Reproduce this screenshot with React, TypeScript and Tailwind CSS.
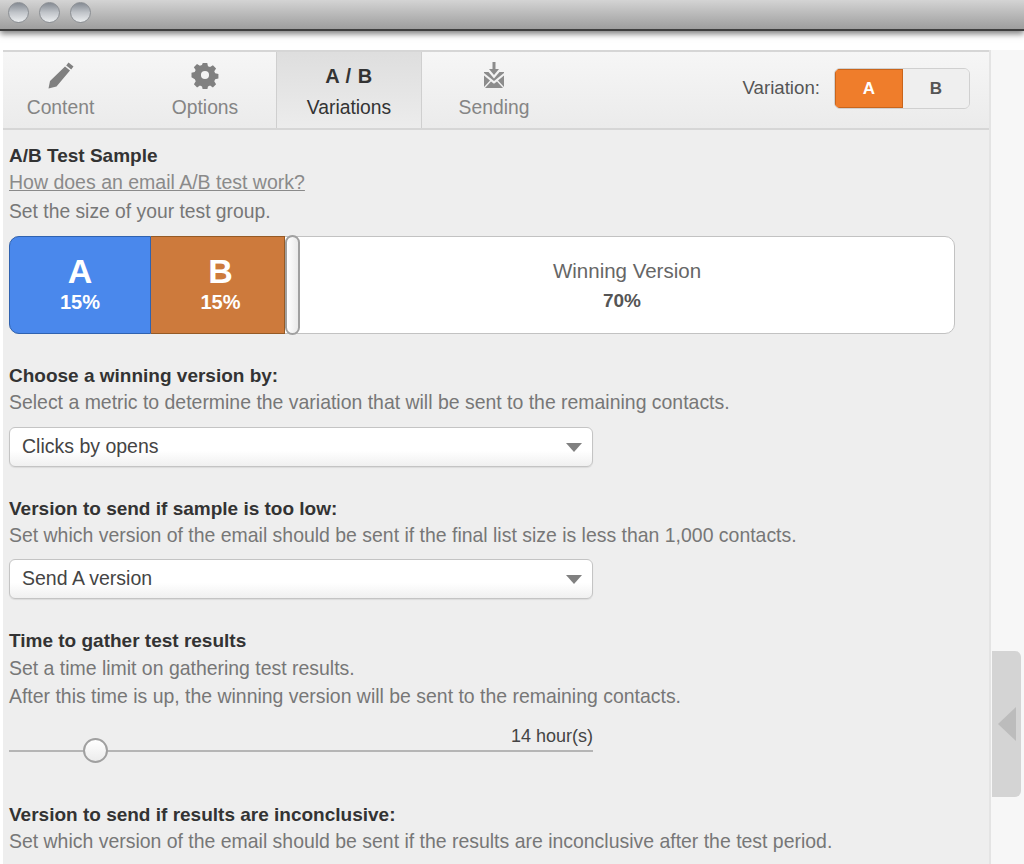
import React from "react";

const Heading = ({ children }: { children: React.ReactNode }) => (
  <div className="h-[26px] text-[19px] leading-[26px] font-bold text-[#333333]">{children}</div>
);
const Hint = ({ children }: { children: React.ReactNode }) => (
  <div className="h-[27px] text-[19.450px] leading-[27px] text-[#777777]">{children}</div>
);
const SelectBox = ({ label }: { label: string }) => (
  <div className="flex h-[40px] w-[584px] items-center justify-between rounded-[6px] border border-[#c4c4c4] bg-gradient-to-b from-white from-60% to-[#f0f0f0] pl-3 pr-[10px] shadow-[0_1px_1px_rgba(0,0,0,0.08)]">
    <span className="text-[19.500px] text-[#444444]">{label}</span>
    <svg width="16" height="10" viewBox="0 0 16 10"><path d="M0 1h16L8 10z" fill="#808080" /></svg>
  </div>
);
const Light = () => (
  <div className="h-[21px] w-[21px] rounded-full border border-[#8b8f94] bg-gradient-to-b from-[#858b93] via-[#c0c4c9] to-[#eceef0]" />
);
const TabLabel = ({ children, active }: { children: React.ReactNode; active?: boolean }) => (
  <span className={`text-[19.300px] leading-[22px] ${active ? "text-[#333333]" : "text-[#858585]"}`}>{children}</span>
);

export default function App() {
  return (
    <div className="relative flex h-[864px] w-[1024px] flex-col overflow-hidden bg-white font-['Liberation_Sans',Arial,sans-serif]">
      <div className="flex h-[31px] shrink-0 items-center gap-[10px] border-b-2 border-[#3e3e3e] bg-gradient-to-b from-[#d4d4d4] to-[#9e9e9e] pb-[5px] pl-[8px] shadow-[0_3px_6px_rgba(0,0,0,0.5)]">
        <Light />
        <Light />
        <Light />
      </div>
      <div className="h-[19px] shrink-0" />
      <div className="flex min-h-0 flex-1">
        <div className="w-[3px] shrink-0" />
        <div className="flex w-[988px] shrink-0 flex-col border-r-2 border-[#e4e4e4] bg-[#eeeeee]">
          <div className="flex h-[80px] shrink-0 items-stretch border-b-2 border-t-2 border-[#d6d6d6] bg-gradient-to-b from-[#f6f6f6] to-[#ebebeb]">
            <div className="flex w-[131px] flex-col items-center pt-[9px] pr-[16px]">
              <svg width="28" height="28" viewBox="0 0 28 28" fill="#808080">
                <path d="M21.500 1.500l5 4-2.300 3-5-4zM18 5.500l5 4L9.500 25.500 1.500 27.500l1.500-7.500z" />
              </svg>
              <div className="mt-[8px]"><TabLabel>Content</TabLabel></div>
            </div>
            <div className="flex w-[142px] flex-col items-center pt-[9px]">
              <svg width="28" height="28" viewBox="0 0 28 28" fill="#808080">
                <path fillRule="evenodd" d="M11.500 1h5l.8 3.600 2.300 1 3.200-2 3.500 3.500-2 3.200 1 2.300 3.600.8v5l-3.600.8-1 2.300 2 3.200-3.500 3.500-3.200-2-2.300 1-.8 3.600h-5l-.8-3.600-2.300-1-3.200 2-3.500-3.500 2-3.200-1-2.300L-1 17v-5l3.600-.8 1-2.300-2-3.200 3.500-3.500 3.200 2 2.300-1zM14 10a4.500 4.500 0 100 9 4.500 4.500 0 000-9z" transform="translate(1.400 1) scale(.9)" />
              </svg>
              <div className="mt-[8px]"><TabLabel>Options</TabLabel></div>
            </div>
            <div className="flex w-[146px] flex-col items-center border-x-[1.5px] border-[#cfcfcf] bg-gradient-to-b from-[#dedede] to-[#ececec] pt-[12px]">
              <span className="h-[25px] text-[20px] font-bold leading-[25px] tracking-[0.5px] text-[#333333]">A / B</span>
              <div className="mt-[8px]"><TabLabel active>Variations</TabLabel></div>
            </div>
            <div className="flex w-[144px] flex-col items-center pt-[9px]">
              <svg width="24" height="28" viewBox="0 0 24 28" fill="#8c8c8c">
                <path d="M10.500 1h3v7h3.500L12 14 7 8h3.500z" />
                <path d="M2 11h4.500l5.500 6.500 5.500-6.500H22v1L12 20 2 12zM2 14.500l6 5-6 6.500zM22 14.500l-6 5 6 6.500zM3 27l6-6.500 3 2.200 3-2.200 6 6.500z" />
              </svg>
              <div className="mt-[8px]"><TabLabel>Sending</TabLabel></div>
            </div>
            <div className="flex flex-1 items-start justify-end pt-[16px] pr-[19px]">
              <span className="mr-[14px] mt-[10px] text-[18.700px] leading-[20px] text-[#555555]">Variation:</span>
              <div className="flex h-[41px] w-[136px] overflow-hidden rounded-[6px] border border-[#d0d0d0] text-[17px] font-bold">
                <div className="flex w-[68px] items-center justify-center border border-[#c9651c] bg-[#ef7d2b] text-white">A</div>
                <div className="flex flex-1 items-center justify-center bg-[#efefef] text-[#555555]">B</div>
              </div>
            </div>
          </div>

          <div className="flex-1 overflow-hidden pl-[6px] pt-[13px]">
            <Heading>A/B Test Sample</Heading>
            <div className="h-[27px] text-[19.500px] leading-[27px] text-[#8a8a8a] underline">How does an email A/B test work?</div>
            <div className="h-[29px] text-[19.300px] leading-[31px] text-[#777777]">Set the size of your test group.</div>

            <div className="relative mt-[11px] flex h-[98px] w-[946px] rounded-[10px] border border-[#c2c2c2] bg-white">
              <div className="-my-px -ml-px flex w-[142px] flex-col items-center rounded-l-[10px] border border-[#2f62b0] bg-[#4a88ec] pt-[14px] text-white">
                <span className="text-[34px] font-bold leading-[40px]">A</span>
                <span className="text-[20px] font-bold leading-[22px]">15%</span>
              </div>
              <div className="-my-px flex w-[134px] flex-col items-center border-y border-r border-[#955a25] bg-[#cd7a3c] pl-[6px] pt-[14px] text-white">
                <span className="text-[34px] font-bold leading-[40px]">B</span>
                <span className="text-[20px] font-bold leading-[22px]">15%</span>
              </div>
              <div className="-my-[2px] h-[100px] w-[15px] shrink-0 rounded-[8px] border-2 border-[#a0a0a0] bg-gradient-to-r from-white to-[#eaeaea]" />
              <div className="flex flex-1 flex-col items-center pt-[19px] text-[20.500px] leading-[30px] text-[#666666]">
                <span>Winning Version</span>
                <span className="mr-[10px] text-[19px] font-bold text-[#555555]">70%</span>
              </div>
            </div>

            <div className="mt-[29px]"><Heading>Choose a winning version by:</Heading></div>
            <Hint>Select a metric to determine the variation that will be sent to the remaining contacts.</Hint>
            <div className="mt-[11px]"><SelectBox label="Clicks by opens" /></div>

            <div className="mt-[29px]"><Heading>Version to send if sample is too low:</Heading></div>
            <Hint>Set which version of the email should be sent if the final list size is less than 1,000 contacts.</Hint>
            <div className="mt-[10px]"><SelectBox label="Send A version" /></div>

            <div className="mt-[29px]"><Heading>Time to gather test results</Heading></div>
            <div className="h-[29px] text-[19.450px] leading-[29px] text-[#777777]">Set a time limit on gathering test results.</div>
            <div className="h-[27px] text-[19.450px] leading-[27px] text-[#777777]">After this time is up, the winning version will be sent to the remaining contacts.</div>

            <div className="relative mt-[14px] h-[28px] w-[584px] border-b-2 border-[#b5b5b5]">
              <div className="text-right text-[18px] leading-[24px] text-[#444444]">14 hour(s)</div>
              <div className="absolute left-[74px] top-[14px] h-[25px] w-[25px] rounded-full border-2 border-[#a0a0a0] bg-gradient-to-b from-white to-[#ececec]" />
            </div>

            <div className="mt-[50px]"><Heading>Version to send if results are inconclusive:</Heading></div>
            <Hint>Set which version of the email should be sent if the results are inconclusive after the test period.</Hint>
          </div>
        </div>
        <div className="flex-1 bg-[#f7f7f7]" />
      </div>
      <div className="absolute left-[992px] top-[651px] flex h-[146px] w-[29px] items-center justify-center rounded-r-[6px] bg-[#d4d4d4]">
        <svg width="18" height="34" viewBox="0 0 18 34"><path d="M0 17L18 0v34z" fill="#bcbcbc" /></svg>
      </div>
    </div>
  );
}
